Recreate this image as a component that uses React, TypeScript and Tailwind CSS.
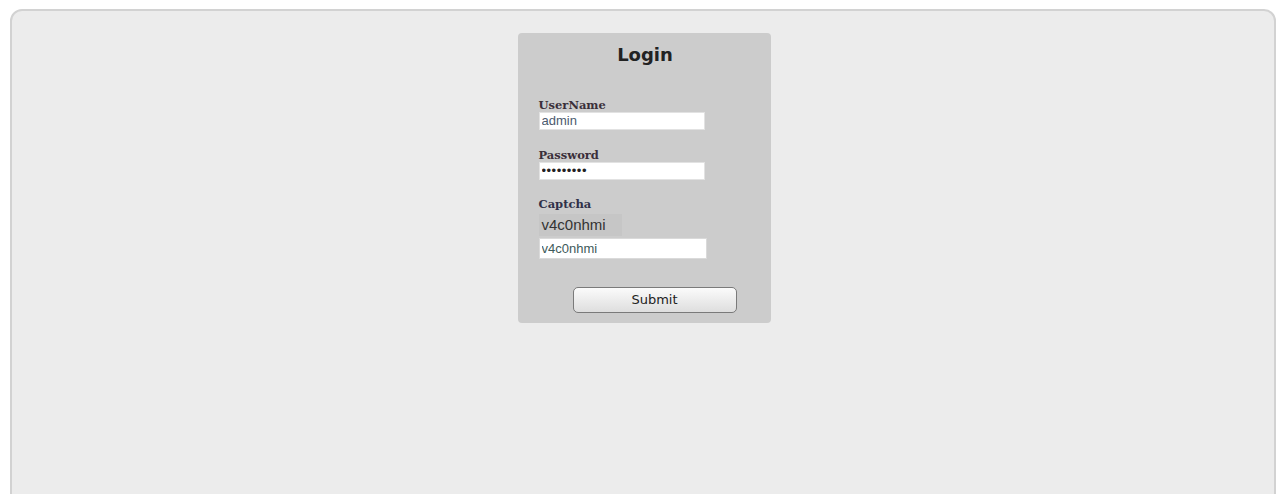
const label = "text-[11.5px] font-bold leading-[13px] font-['DejaVu_Serif',Georgia,serif]";
const field = "bg-white px-[2px] outline-none font-['Liberation_Sans',Arial,sans-serif]";

export default function App() {
  return (
    <div className="w-[1278px] h-[494px] bg-white overflow-hidden pl-[10px] pt-[9px] pr-[2px]">
      <div className="h-[500px] rounded-[12px] border-2 border-[#d2d2d2] bg-[#ececec] flex justify-center pt-[22px]">
        <form
          className="w-[253px] h-[290px] ml-[2px] rounded-[4px] bg-[#cccccc] flex flex-col pl-[21px] pt-[12px] font-['DejaVu_Sans',Verdana,sans-serif]"
          onSubmit={(e) => e.preventDefault()}
        >
          <h2 className="text-center text-[18px] font-bold text-[#222] pr-[19px] leading-[20px]">Login</h2>

          <label className={`mt-[34px] text-[#3a2f3a] ${label}`}>UserName</label>
          <input
            defaultValue="admin"
            className={`w-[166px] h-[18px] text-[13px] text-[#4b5a6e] border border-[#e2e2e2] ${field}`}
          />

          <label className={`mt-[19px] text-[#3a2f3a] ${label}`}>Password</label>
          <input
            type="password"
            defaultValue="123456789"
            className={`w-[166px] h-[18px] text-[13px] tracking-[0.5px] text-[#222] border border-[#e2e2e2] ${field}`}
          />

          <label className={`mt-[18px] text-[#2f3048] ${label}`}>Captcha</label>
          <div className="mt-[3px] w-[83px] h-[22px] bg-[#c6c6c6] pl-[3px] text-[15px] text-[#333] leading-[22px] font-['Liberation_Sans',Arial,sans-serif]">
            v4c0nhmi
          </div>
          <input
            defaultValue="v4c0nhmi"
            className={`mt-[2px] w-[168px] h-[21px] text-[13px] text-[#3e5a5a] border border-[#dadada] ${field}`}
          />

          <button
            type="submit"
            className="mt-[28px] ml-[34px] w-[164px] h-[26px] rounded-[5px] border border-[#7a7a7a] bg-gradient-to-b from-[#fbfbfb] to-[#dedede] text-[13px] text-[#222]"
          >
            Submit
          </button>
        </form>
      </div>
    </div>
  );
}
